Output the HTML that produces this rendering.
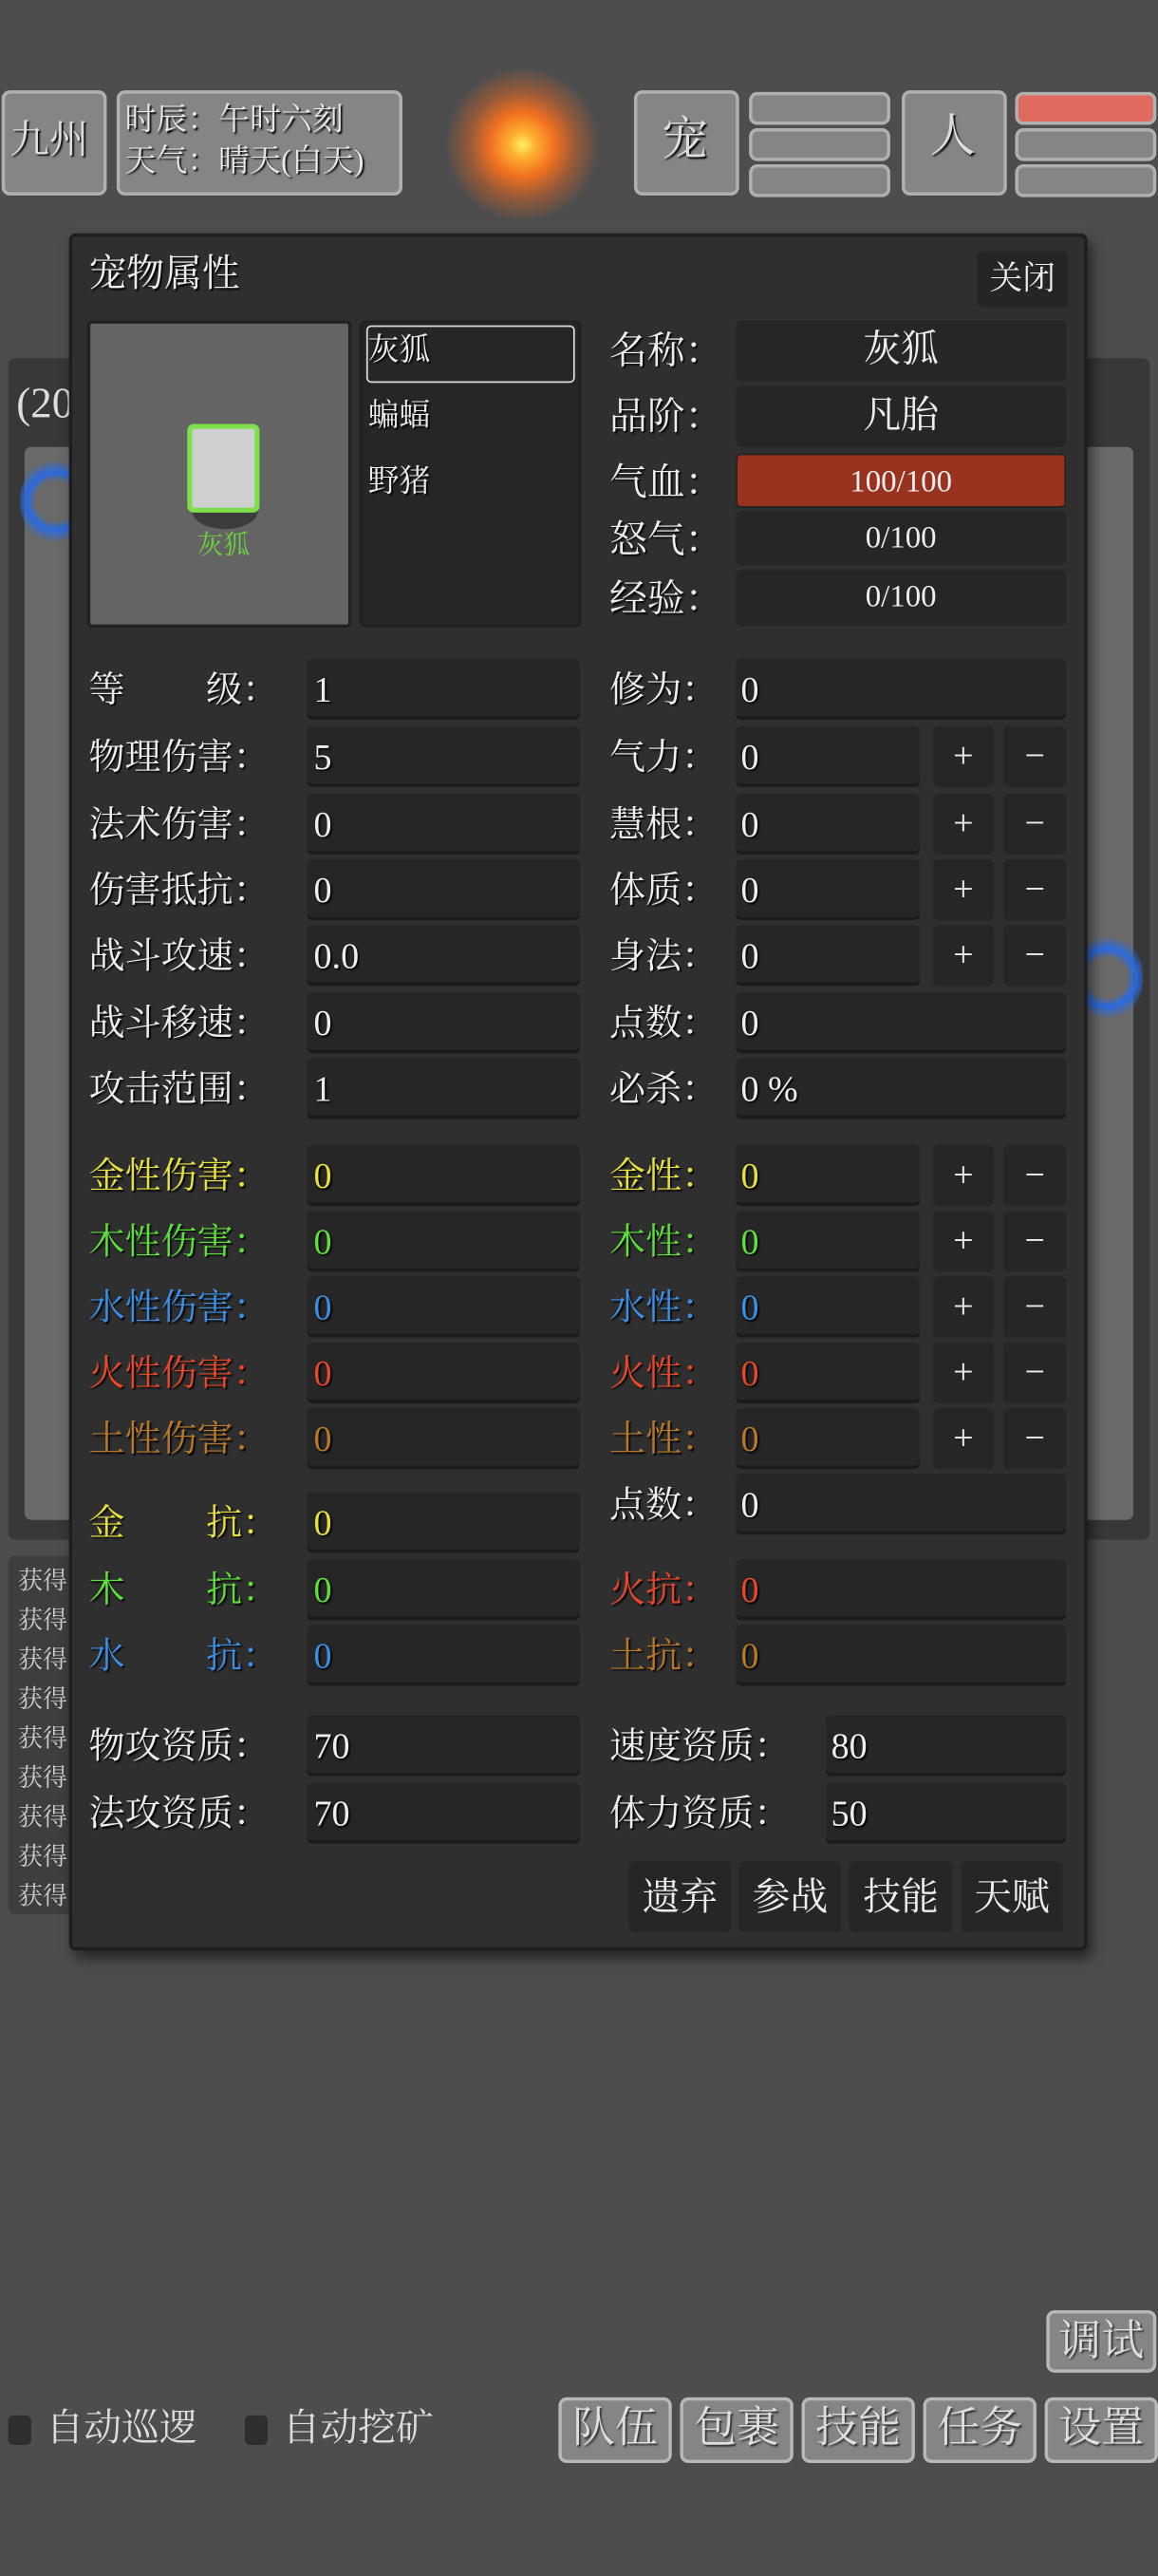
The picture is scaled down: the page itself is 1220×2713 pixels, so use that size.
<!DOCTYPE html>
<html><head><meta charset="utf-8"><style>
*{margin:0;padding:0;box-sizing:border-box}
html,body{width:1220px;height:2712px;overflow:hidden;background:#4d4d4d}
#s{position:absolute;left:0;top:0;width:705px;height:1568px;transform:scale(1.73050);transform-origin:0 0;font-family:"Liberation Serif","Noto Serif CJK SC",serif;color:#eee}
.a{position:absolute}
.t{position:absolute;white-space:nowrap;font-size:22px;line-height:1;text-shadow:1px 1px 1px #000}
i{font-style:normal;display:inline-block;width:1em;text-align:center}
.gb{position:absolute;background:#858585;border:2px solid #b0b0b0;border-radius:5px}
.f{position:absolute;background:#262626;border-radius:3px;box-shadow:inset 0 -2px 0 #1b1b1b}
.pm{position:absolute;background:#262626;border-radius:3px;text-align:center;font-size:22px;line-height:36px;color:#eee}
.bb{position:absolute;background:#858585;border:2px solid #b8b8b8;border-radius:5px;font-size:26px;color:#ddd;text-align:center;line-height:34px;text-shadow:1px 1px 1px #333}
</style></head><body><div id="s">
<!-- top -->
<div class="gb" style="left:1px;top:55px;width:64px;height:64px"></div>
<div class="t" style="left:6px;top:74px;font-size:24px;color:#ddd">九州</div>
<div class="gb" style="left:71px;top:55px;width:174px;height:64px"></div>
<div class="t" style="left:76px;top:64px;font-size:19px;color:#e6e6e6">时辰<i>：</i>午时六刻</div>
<div class="t" style="left:76px;top:89px;font-size:19px;color:#e6e6e6">天气<i>：</i>晴天(白天)</div>
<div class="a" style="left:272px;top:42px;width:92px;height:92px;border-radius:50%;background:radial-gradient(circle,#fff060 0%,#ffb030 12%,#f07020 30%,rgba(210,100,40,0.55) 50%,rgba(120,90,70,0.2) 70%,rgba(80,80,80,0) 100%)"></div>
<div class="gb" style="left:386px;top:55px;width:64px;height:64px"></div>
<div class="t" style="left:403px;top:72px;font-size:28px;color:#ddd">宠</div>
<div class="gb" style="left:456px;top:56px;width:86px;height:20px"></div>
<div class="gb" style="left:456px;top:78px;width:86px;height:20px"></div>
<div class="gb" style="left:456px;top:100px;width:86px;height:20px"></div>
<div class="gb" style="left:549px;top:55px;width:64px;height:64px"></div>
<div class="t" style="left:566px;top:70px;font-size:28px;color:#ddd">人</div>
<div class="gb" style="left:618px;top:56px;width:86px;height:20px;background:#e06a5e"></div>
<div class="gb" style="left:618px;top:78px;width:86px;height:20px"></div>
<div class="gb" style="left:618px;top:100px;width:86px;height:20px"></div>
<!-- background map panel -->
<div class="a" style="left:5px;top:218px;width:695px;height:719px;background:#383838;border-radius:4px"></div>
<div class="a" style="left:15px;top:272px;width:675px;height:653px;background:#6a6a6a;border-radius:4px"></div>
<div class="t" style="left:10px;top:233px;font-size:26px;color:#ddd;text-shadow:none">(200,200)</div>
<div class="a" style="left:12px;top:278px;width:44px;height:54px;border-radius:50%;background:radial-gradient(circle,rgba(60,120,230,0) 35%,#2a6ae0 50%,rgba(60,120,230,0) 72%)"></div>
<div class="a" style="left:652px;top:568px;width:44px;height:54px;border-radius:50%;background:radial-gradient(circle,rgba(60,120,230,0) 35%,#2a6ae0 50%,rgba(60,120,230,0) 72%)"></div>
<!-- log panel -->
<div class="a" style="left:5px;top:947px;width:60px;height:218px;background:#3e3e3e;border-radius:4px"></div>
<div class="t" style="left:11px;top:951px;font-size:15px;line-height:24px;color:#ccc;text-shadow:none;white-space:pre">获得
获得
获得
获得
获得
获得
获得
获得
获得</div>
<!-- bottom -->
<div class="bb" style="left:637px;top:1406px;width:67px;height:38px">调试</div>
<div class="a" style="left:5px;top:1470px;width:14px;height:18px;background:#2f2f2f;border-radius:3px"></div>
<div class="t" style="left:28px;top:1466px;font-size:23px;color:#ddd;text-shadow:none">自动巡逻</div>
<div class="a" style="left:149px;top:1470px;width:14px;height:18px;background:#2f2f2f;border-radius:3px"></div>
<div class="t" style="left:172px;top:1466px;font-size:23px;color:#ddd;text-shadow:none">自动挖矿</div>
<div class="bb" style="left:340px;top:1459px;width:69px;height:40px">队伍</div>
<div class="bb" style="left:414px;top:1459px;width:69px;height:40px">包裹</div>
<div class="bb" style="left:488px;top:1459px;width:69px;height:40px">技能</div>
<div class="bb" style="left:562px;top:1459px;width:69px;height:40px">任务</div>
<div class="bb" style="left:636px;top:1459px;width:69px;height:40px">设置</div>
<!-- modal -->
<div class="a" style="left:42px;top:142px;width:620px;height:1045px;background:#2f2f2f;border:2px solid #1e1e1e;border-radius:4px;box-shadow:3px 5px 8px rgba(0,0,0,0.5)"></div>
<div class="t" style="left:54px;top:155px;font-size:23px">宠物属性</div>
<div class="pm" style="left:595px;top:153px;width:55px;height:34px;line-height:34px;font-size:20px;background:#252525">关闭</div>
<div class="a" style="left:53px;top:195px;width:161px;height:187px;background:#646464;border:2px solid #222;border-radius:3px"></div>
<div class="a" style="left:117px;top:300px;width:40px;height:22px;border-radius:50%;background:#3c3c3c"></div>
<div class="a" style="left:114px;top:258px;width:44px;height:54px;background:#cfcfcf;border:3px solid #7ddf4a;border-radius:4px"></div>
<div class="t" style="left:120px;top:325px;font-size:16px;color:#6ad23a;text-shadow:none">灰狐</div>
<div class="a" style="left:219px;top:195px;width:135px;height:187px;background:#262626;border:2px solid #222;border-radius:3px"></div>
<div class="a" style="left:223px;top:198px;width:127px;height:35px;border:1.5px solid #ddd;border-radius:3px"></div>
<div class="t" style="left:224px;top:204px;font-size:19px">灰狐</div>
<div class="t" style="left:224px;top:244px;font-size:19px">蝙蝠</div>
<div class="t" style="left:224px;top:284px;font-size:19px">野猪</div>
<div class="t" style="left:371px;top:202px;font-size:23px">名称<i>：</i></div><div class="pm" style="left:448px;top:195px;width:201px;height:37px;font-size:23px">灰狐</div>
<div class="t" style="left:371px;top:242px;font-size:23px">品阶<i>：</i></div><div class="pm" style="left:448px;top:235px;width:201px;height:37px;font-size:23px">凡胎</div>
<div class="t" style="left:371px;top:282px;font-size:23px">气血<i>：</i></div><div class="pm" style="left:448px;top:276px;width:201px;height:33px;line-height:33px;font-size:19px;background:#9a3220;border:1px solid #222">100/100</div>
<div class="t" style="left:371px;top:317px;font-size:23px">怒气<i>：</i></div><div class="pm" style="left:448px;top:311px;width:201px;height:33px;line-height:33px;font-size:19px">0/100</div>
<div class="t" style="left:371px;top:353px;font-size:23px">经验<i>：</i></div><div class="pm" style="left:448px;top:347px;width:201px;height:34px;line-height:34px;font-size:19px">0/100</div>
<!-- stats -->
<div class="t" style="left:54px;top:409px">等&nbsp;&nbsp;&nbsp;&nbsp;&nbsp;&nbsp;&nbsp;&nbsp;&nbsp;级<i>：</i></div><div class="f" style="left:187px;top:401px;width:166px;height:37px"></div><div class="t" style="left:191px;top:409px">1</div>
<div class="t" style="left:371px;top:409px">修为<i>：</i></div><div class="f" style="left:448px;top:401px;width:201px;height:37px"></div><div class="t" style="left:451px;top:409px">0</div>

<div class="t" style="left:54px;top:450px">物理伤害<i>：</i></div><div class="f" style="left:187px;top:442px;width:166px;height:37px"></div><div class="t" style="left:191px;top:450px">5</div>
<div class="t" style="left:371px;top:450px">气力<i>：</i></div><div class="f" style="left:448px;top:442px;width:112px;height:37px"></div><div class="t" style="left:451px;top:450px">0</div>
<div class="pm" style="left:568px;top:442px;width:37px;height:37px">+</div><div class="pm" style="left:611px;top:442px;width:38px;height:37px">−</div>

<div class="t" style="left:54px;top:491px">法术伤害<i>：</i></div><div class="f" style="left:187px;top:483px;width:166px;height:37px"></div><div class="t" style="left:191px;top:491px">0</div>
<div class="t" style="left:371px;top:491px">慧根<i>：</i></div><div class="f" style="left:448px;top:483px;width:112px;height:37px"></div><div class="t" style="left:451px;top:491px">0</div>
<div class="pm" style="left:568px;top:483px;width:37px;height:37px">+</div><div class="pm" style="left:611px;top:483px;width:38px;height:37px">−</div>

<div class="t" style="left:54px;top:531px">伤害抵抗<i>：</i></div><div class="f" style="left:187px;top:523px;width:166px;height:37px"></div><div class="t" style="left:191px;top:531px">0</div>
<div class="t" style="left:371px;top:531px">体质<i>：</i></div><div class="f" style="left:448px;top:523px;width:112px;height:37px"></div><div class="t" style="left:451px;top:531px">0</div>
<div class="pm" style="left:568px;top:523px;width:37px;height:37px">+</div><div class="pm" style="left:611px;top:523px;width:38px;height:37px">−</div>

<div class="t" style="left:54px;top:571px">战斗攻速<i>：</i></div><div class="f" style="left:187px;top:563px;width:166px;height:37px"></div><div class="t" style="left:191px;top:571px">0.0</div>
<div class="t" style="left:371px;top:571px">身法<i>：</i></div><div class="f" style="left:448px;top:563px;width:112px;height:37px"></div><div class="t" style="left:451px;top:571px">0</div>
<div class="pm" style="left:568px;top:563px;width:37px;height:37px">+</div><div class="pm" style="left:611px;top:563px;width:38px;height:37px">−</div>

<div class="t" style="left:54px;top:612px">战斗移速<i>：</i></div><div class="f" style="left:187px;top:604px;width:166px;height:37px"></div><div class="t" style="left:191px;top:612px">0</div>
<div class="t" style="left:371px;top:612px">点数<i>：</i></div><div class="f" style="left:448px;top:604px;width:201px;height:37px"></div><div class="t" style="left:451px;top:612px">0</div>

<div class="t" style="left:54px;top:652px">攻击范围<i>：</i></div><div class="f" style="left:187px;top:644px;width:166px;height:37px"></div><div class="t" style="left:191px;top:652px">1</div>
<div class="t" style="left:371px;top:652px">必杀<i>：</i></div><div class="f" style="left:448px;top:644px;width:201px;height:37px"></div><div class="t" style="left:451px;top:652px">0 %</div>

<!-- elements -->
<div class="t" style="left:54px;top:705px;color:#e8e040">金性伤害<i>：</i></div><div class="f" style="left:187px;top:697px;width:166px;height:37px"></div><div class="t" style="left:191px;top:705px;color:#e8e040">0</div>
<div class="t" style="left:371px;top:705px;color:#e8e040">金性<i>：</i></div><div class="f" style="left:448px;top:697px;width:112px;height:37px"></div><div class="t" style="left:451px;top:705px;color:#e8e040">0</div>
<div class="pm" style="left:568px;top:697px;width:37px;height:37px">+</div><div class="pm" style="left:611px;top:697px;width:38px;height:37px">−</div>

<div class="t" style="left:54px;top:745px;color:#5ee03a">木性伤害<i>：</i></div><div class="f" style="left:187px;top:737px;width:166px;height:37px"></div><div class="t" style="left:191px;top:745px;color:#5ee03a">0</div>
<div class="t" style="left:371px;top:745px;color:#5ee03a">木性<i>：</i></div><div class="f" style="left:448px;top:737px;width:112px;height:37px"></div><div class="t" style="left:451px;top:745px;color:#5ee03a">0</div>
<div class="pm" style="left:568px;top:737px;width:37px;height:37px">+</div><div class="pm" style="left:611px;top:737px;width:38px;height:37px">−</div>

<div class="t" style="left:54px;top:785px;color:#3a90e6">水性伤害<i>：</i></div><div class="f" style="left:187px;top:777px;width:166px;height:37px"></div><div class="t" style="left:191px;top:785px;color:#3a90e6">0</div>
<div class="t" style="left:371px;top:785px;color:#3a90e6">水性<i>：</i></div><div class="f" style="left:448px;top:777px;width:112px;height:37px"></div><div class="t" style="left:451px;top:785px;color:#3a90e6">0</div>
<div class="pm" style="left:568px;top:777px;width:37px;height:37px">+</div><div class="pm" style="left:611px;top:777px;width:38px;height:37px">−</div>

<div class="t" style="left:54px;top:825px;color:#e8472a">火性伤害<i>：</i></div><div class="f" style="left:187px;top:817px;width:166px;height:37px"></div><div class="t" style="left:191px;top:825px;color:#e8472a">0</div>
<div class="t" style="left:371px;top:825px;color:#e8472a">火性<i>：</i></div><div class="f" style="left:448px;top:817px;width:112px;height:37px"></div><div class="t" style="left:451px;top:825px;color:#e8472a">0</div>
<div class="pm" style="left:568px;top:817px;width:37px;height:37px">+</div><div class="pm" style="left:611px;top:817px;width:38px;height:37px">−</div>

<div class="t" style="left:54px;top:865px;color:#b8782a">土性伤害<i>：</i></div><div class="f" style="left:187px;top:857px;width:166px;height:37px"></div><div class="t" style="left:191px;top:865px;color:#b8782a">0</div>
<div class="t" style="left:371px;top:865px;color:#b8782a">土性<i>：</i></div><div class="f" style="left:448px;top:857px;width:112px;height:37px"></div><div class="t" style="left:451px;top:865px;color:#b8782a">0</div>
<div class="pm" style="left:568px;top:857px;width:37px;height:37px">+</div><div class="pm" style="left:611px;top:857px;width:38px;height:37px">−</div>

<div class="t" style="left:371px;top:905px">点数<i>：</i></div><div class="f" style="left:448px;top:897px;width:201px;height:37px"></div><div class="t" style="left:451px;top:905px">0</div>

<div class="t" style="left:54px;top:916px;color:#e8e040">金&nbsp;&nbsp;&nbsp;&nbsp;&nbsp;&nbsp;&nbsp;&nbsp;&nbsp;抗<i>：</i></div><div class="f" style="left:187px;top:908px;width:166px;height:37px"></div><div class="t" style="left:191px;top:916px;color:#e8e040">0</div>
<div class="t" style="left:54px;top:957px;color:#5ee03a">木&nbsp;&nbsp;&nbsp;&nbsp;&nbsp;&nbsp;&nbsp;&nbsp;&nbsp;抗<i>：</i></div><div class="f" style="left:187px;top:949px;width:166px;height:37px"></div><div class="t" style="left:191px;top:957px;color:#5ee03a">0</div>
<div class="t" style="left:371px;top:957px;color:#e8472a">火抗<i>：</i></div><div class="f" style="left:448px;top:949px;width:201px;height:37px"></div><div class="t" style="left:451px;top:957px;color:#e8472a">0</div>
<div class="t" style="left:54px;top:997px;color:#3a90e6">水&nbsp;&nbsp;&nbsp;&nbsp;&nbsp;&nbsp;&nbsp;&nbsp;&nbsp;抗<i>：</i></div><div class="f" style="left:187px;top:989px;width:166px;height:37px"></div><div class="t" style="left:191px;top:997px;color:#3a90e6">0</div>
<div class="t" style="left:371px;top:997px;color:#b8782a">土抗<i>：</i></div><div class="f" style="left:448px;top:989px;width:201px;height:37px"></div><div class="t" style="left:451px;top:997px;color:#b8782a">0</div>

<div class="t" style="left:54px;top:1052px">物攻资质<i>：</i></div><div class="f" style="left:187px;top:1044px;width:166px;height:37px"></div><div class="t" style="left:191px;top:1052px">70</div>
<div class="t" style="left:371px;top:1052px">速度资质<i>：</i></div><div class="f" style="left:503px;top:1044px;width:146px;height:37px"></div><div class="t" style="left:506px;top:1052px">80</div>
<div class="t" style="left:54px;top:1093px">法攻资质<i>：</i></div><div class="f" style="left:187px;top:1085px;width:166px;height:37px"></div><div class="t" style="left:191px;top:1093px">70</div>
<div class="t" style="left:371px;top:1093px">体力资质<i>：</i></div><div class="f" style="left:503px;top:1085px;width:146px;height:37px"></div><div class="t" style="left:506px;top:1093px">50</div>

<div class="pm" style="left:383px;top:1133px;width:62px;height:43px;line-height:43px;font-size:23px">遗弃</div>
<div class="pm" style="left:450px;top:1133px;width:62px;height:43px;line-height:43px;font-size:23px">参战</div>
<div class="pm" style="left:517px;top:1133px;width:63px;height:43px;line-height:43px;font-size:23px">技能</div>
<div class="pm" style="left:585px;top:1133px;width:62px;height:43px;line-height:43px;font-size:23px">天赋</div>
</div></body></html>
